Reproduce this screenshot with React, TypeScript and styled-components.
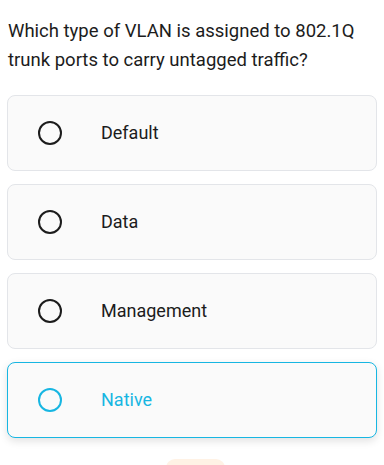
import React from "react";
import styled, { createGlobalStyle } from "styled-components";

const Global = createGlobalStyle`
  html, body { margin: 0; padding: 0; background: #ffffff; }
  body { font-family: Roboto, "Noto Sans", sans-serif; -webkit-font-smoothing: antialiased; }
`;

const Page = styled.div`
  width: 384px;
  height: 465px;
  overflow: hidden;
  box-sizing: border-box;
  padding: 17px 7px 0;
  display: flex;
  flex-direction: column;
`;

const Question = styled.p`
  margin: 0 0 0 1px;
  font-size: 18.5px;
  line-height: 29px;
  color: #1c1c1c;
  font-weight: 400;
`;

const Options = styled.div`
  margin-top: 20px;
  display: flex;
  flex-direction: column;
  gap: 13px;
`;

const Card = styled.div<{ $selected?: boolean }>`
  box-sizing: border-box;
  height: 76px;
  border-radius: 8px;
  background: #fafafa;
  border: 1px solid ${(p) => (p.$selected ? "#17b6e2" : "#e3e5e9")};
  box-shadow: ${(p) => (p.$selected ? "0 3px 8px rgba(0,0,0,0.12)" : "none")};
  display: flex;
  align-items: center;
  padding-left: 30px;
  color: ${(p) => (p.$selected ? "#17b6e2" : "#1c1c1c")};
`;

const Radio = styled.span`
  box-sizing: border-box;
  width: 24px;
  height: 24px;
  border-radius: 50%;
  border: 2.5px solid currentColor;
  flex: none;
`;

const Label = styled.span`
  margin-left: 39px;
  font-size: 18px;
  line-height: 24px;
`;

const Footer = styled.div`
  display: flex;
  justify-content: center;
  margin-top: 21px;
`;

const PeachButton = styled.div`
  width: 59px;
  height: 40px;
  border-radius: 9px;
  background: #fff2e5;
  margin-left: 7px;
`;

const options = ["Default", "Data", "Management", "Native"];

export default function App() {
  const selected = "Native";
  return (
    <>
      <Global />
      <Page>
        <Question>
          Which type of VLAN is assigned to 802.1Q trunk ports to carry untagged traffic?
        </Question>
        <Options>
          {options.map((o) => (
            <Card key={o} $selected={o === selected}>
              <Radio />
              <Label>{o}</Label>
            </Card>
          ))}
        </Options>
        <Footer>
          <PeachButton />
        </Footer>
      </Page>
    </>
  );
}
